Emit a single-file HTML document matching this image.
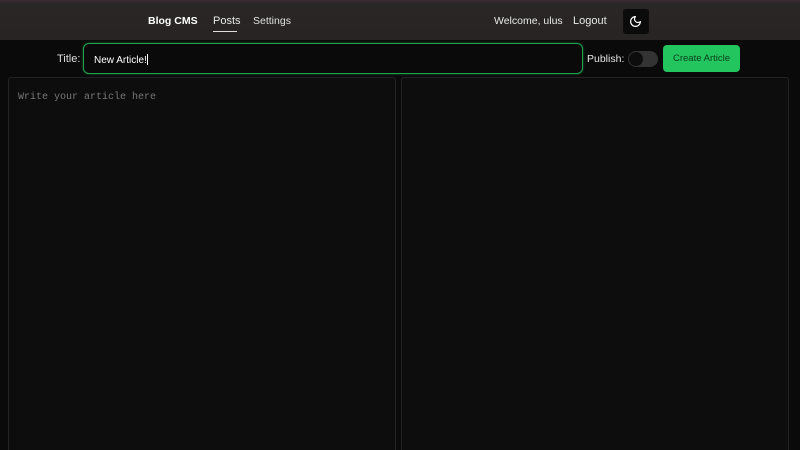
<!DOCTYPE html>
<html><head><style>
*{box-sizing:border-box;margin:0;padding:0}
html,body{width:800px;height:450px;overflow:hidden}
body{background:#0b0a0a;font-family:"Liberation Sans",sans-serif;color:#eee;position:relative}
.hdr{position:absolute;left:0;top:0;width:800px;height:40px;background:linear-gradient(180deg,#3a2a35 0px,#2a2626 4px,#282424 40px)}
.t{position:absolute;font-size:11px;white-space:nowrap}
.panel{position:absolute;top:77px;height:380px;background:#0d0d0d;border:1px solid #232323;border-radius:3px}
</style></head><body>
<div class="hdr"></div>
<div class="t" style="left:148px;top:15px;font-weight:bold;color:#fff;font-size:10.5px">Blog CMS</div>
<div class="t" style="left:213px;top:15px;color:#e8e8e8">Posts</div>
<div style="position:absolute;left:213px;top:31px;width:24px;height:1px;background:#ddd"></div>
<div class="t" style="left:253px;top:15px;color:#e0e0e0;font-size:10.5px">Settings</div>
<div class="t" style="left:494px;top:15px;color:#e8e8e8;font-size:10.5px">Welcome, ulus</div>
<div class="t" style="left:573px;top:15px;color:#e8e8e8">Logout</div>
<div style="position:absolute;left:623px;top:9px;width:26px;height:25px;background:#0c0b0b;border-radius:3px"></div>
<svg style="position:absolute;left:629px;top:15px" width="13" height="13" viewBox="0 0 24 24" fill="none" stroke="#fff" stroke-width="2.2" stroke-linecap="round" stroke-linejoin="round"><path d="M12 3a6 6 0 0 0 9 9 9 9 0 1 1-9-9Z"/></svg>
<div class="t" style="left:57px;top:53px;color:#ddd">Title:</div>
<div style="position:absolute;left:83px;top:43px;width:500px;height:31px;border:1px solid #22a04c;border-radius:6px;background:#0a0a0a;box-shadow:0 0 2px #1a6a35"></div>
<div class="t" style="left:94px;top:54px;font-size:10px;color:#fff">New Article!<span style="display:inline-block;width:1px;height:11px;background:#fff;vertical-align:-2px"></span></div>
<div class="t" style="left:587px;top:53px;color:#e5e5e5;font-size:10.5px">Publish:</div>
<div style="position:absolute;left:628px;top:51px;width:30px;height:16px;background:#333;border-radius:8px"></div>
<div style="position:absolute;left:629px;top:52px;width:14px;height:14px;background:#0d0d0d;border-radius:50%"></div>
<div style="position:absolute;left:663px;top:45px;width:77px;height:27px;background:#22c55e;border-radius:4px;color:#0d3d1d;font-size:9.5px;text-align:center;line-height:28px">Create Article</div>
<div class="panel" style="left:8px;width:388px"></div>
<div class="panel" style="left:401px;width:388px"></div>
<div class="t" style="left:18px;top:92px;font-family:'Liberation Mono',monospace;font-size:10px;color:#777">Write your article here</div>
</body></html>
